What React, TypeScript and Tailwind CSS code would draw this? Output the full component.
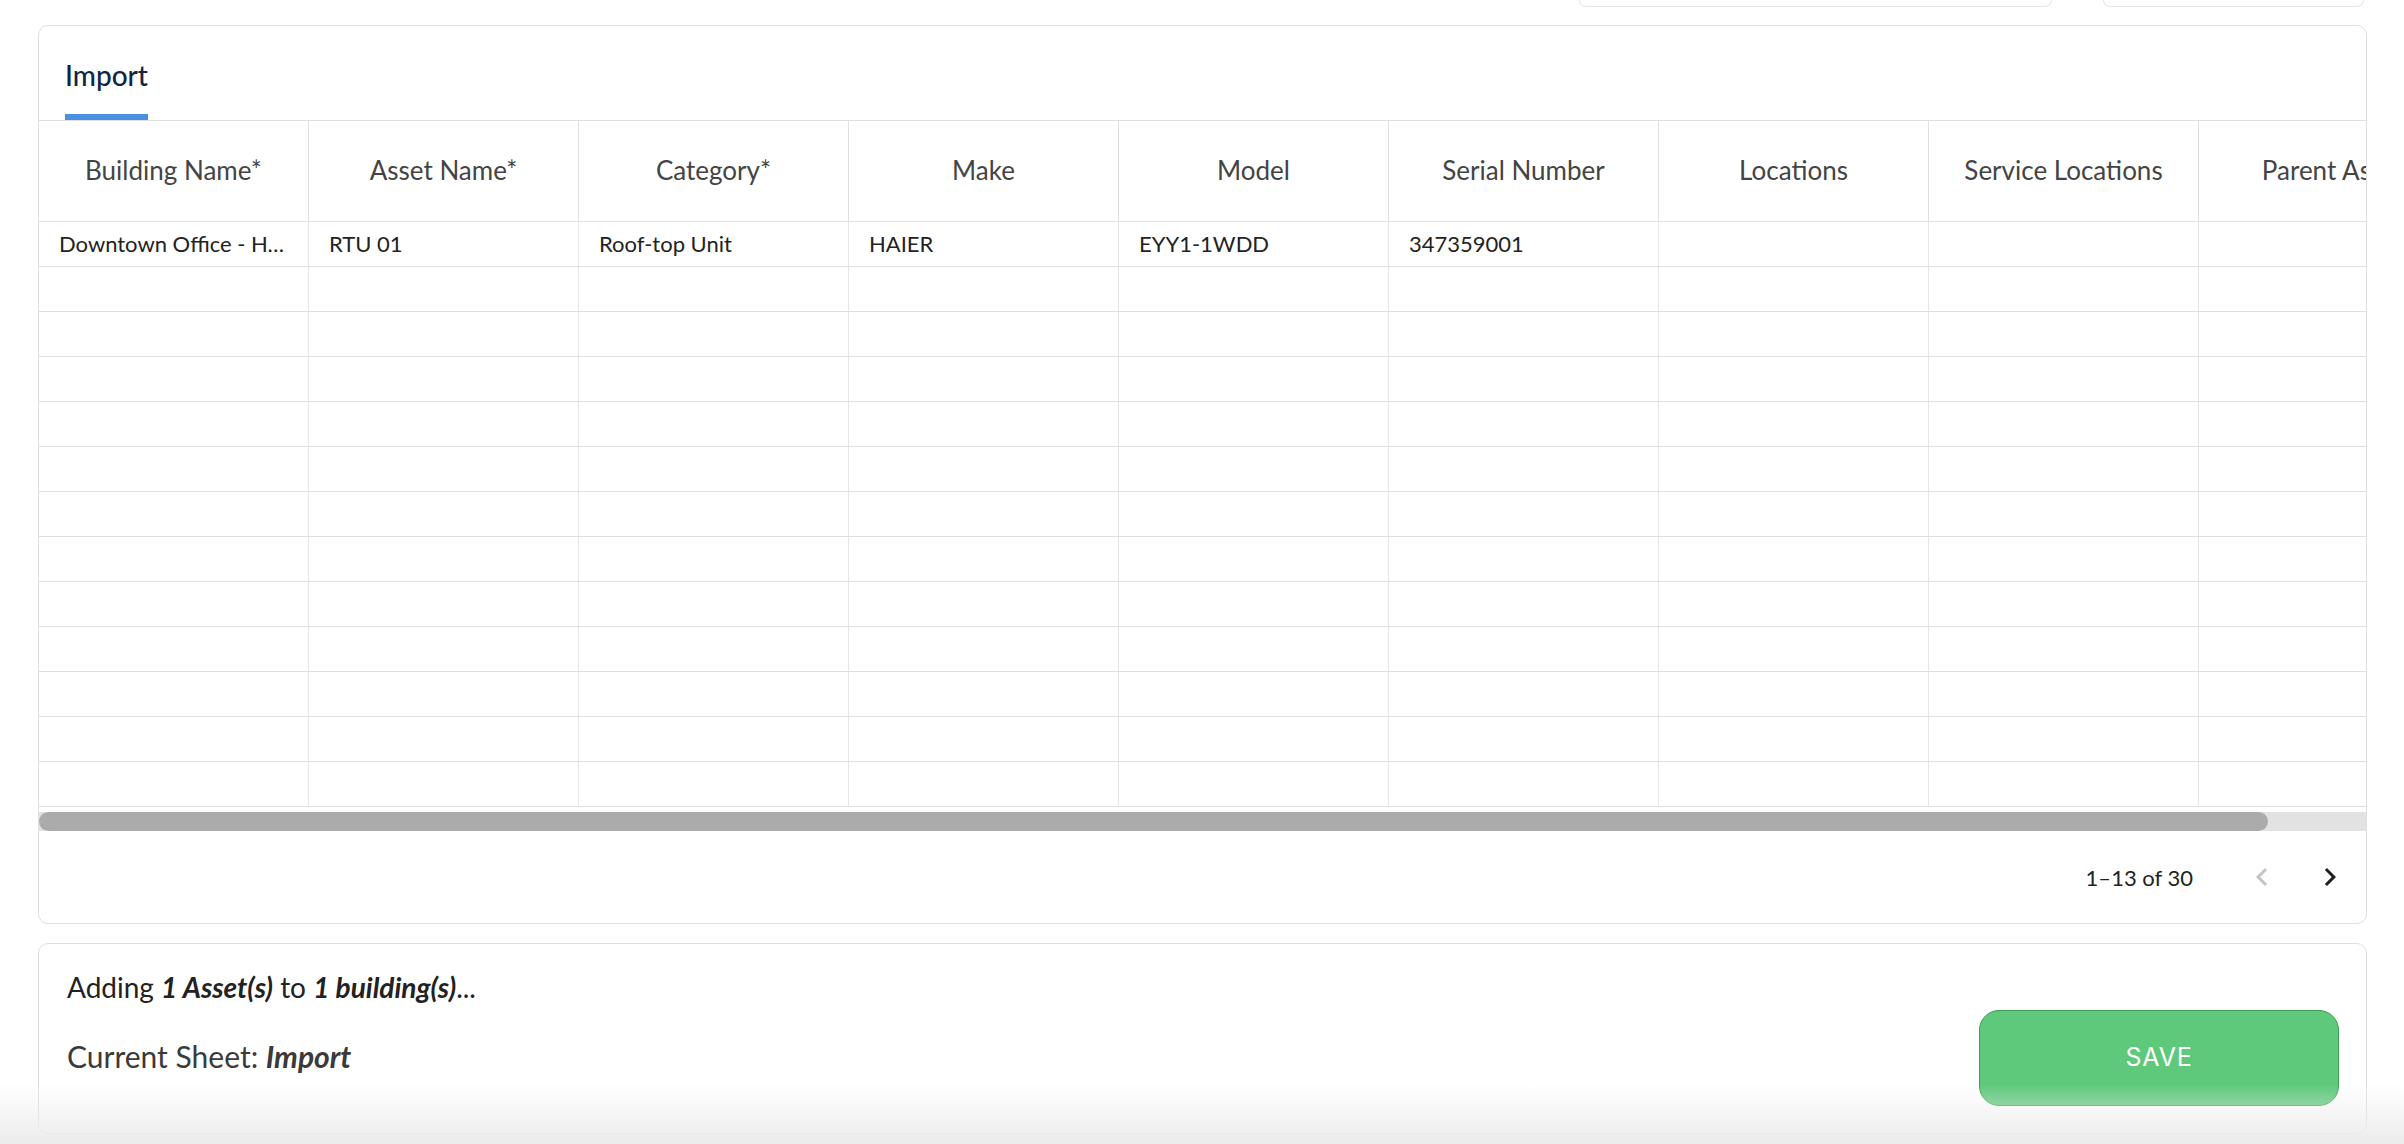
import { useState } from 'react';

const COLUMNS = [
  'Building Name*',
  'Asset Name*',
  'Category*',
  'Make',
  'Model',
  'Serial Number',
  'Locations',
  'Service Locations',
  'Parent Asset',
];

const FIRST_ROW = [
  'Downtown Office - Headquarters',
  'RTU 01',
  'Roof-top Unit',
  'HAIER',
  'EYY1-1WDD',
  '347359001',
  '',
  '',
  '',
];

const ROW_COUNT = 13;

const ChevronLeft = ({ className }: { className?: string }) => (
  <svg viewBox="0 0 24 24" className={className} fill="currentColor">
    <path d="M15.41 7.41 14 6l-6 6 6 6 1.41-1.41L10.83 12z" />
  </svg>
);

const ChevronRight = ({ className }: { className?: string }) => (
  <svg viewBox="0 0 24 24" className={className} fill="currentColor">
    <path d="M10 6 8.59 7.41 13.17 12l-4.58 4.59L10 18l6-6z" />
  </svg>
);

const ImportGrid = () => {
  const rows = Array.from({ length: ROW_COUNT }, (_, i) =>
    i === 0 ? FIRST_ROW : COLUMNS.map(() => ''),
  );

  return (
    <div className="overflow-hidden">
      <div className="w-[2430px]">
        {/* header */}
        <div className="flex h-[101px] border-b border-[#e0e0e0]">
          {COLUMNS.map((col) => (
            <div
              key={col}
              className="w-[270px] shrink-0 border-r border-[#e0e0e0] flex items-center justify-center pb-[2px] text-[26px] text-[#444444] whitespace-nowrap"
            >
              {col}
            </div>
          ))}
        </div>

        {/* rows */}
        {rows.map((row, r) => (
          <div key={r} className="flex h-[45px] border-b border-[#e0e0e0]">
            {row.map((cell, c) => (
              <div
                key={c}
                className="w-[270px] shrink-0 border-r border-[#e6e6e6] flex items-center pb-[2px] px-[20px] text-[22px] text-[#222222] min-w-0"
              >
                <span className="truncate">{cell}</span>
              </div>
            ))}
          </div>
        ))}
      </div>
    </div>
  );
};

export default function App() {
  const [page] = useState({ from: 1, to: 13, total: 30 });

  return (
    <div className="relative min-h-screen bg-white font-['Lato','Open_Sans',sans-serif]">
      <div className="pl-[38px] pr-[37px]">
        {/* bits of the toolbar above, scrolled mostly out of view */}
        <div className="flex justify-end gap-[51px] pr-[3px]">
          <div className="w-[473px] h-[7px] border border-t-0 border-[#e6e6e6] rounded-b-[12px]" />
          <div className="w-[261px] h-[7px] border border-t-0 border-[#e6e6e6] rounded-b-[12px]" />
        </div>

        {/* sheet card */}
        <div className="mt-[18px] border border-[#e0e0e0] rounded-[10px] overflow-hidden bg-white">
          <div className="flex items-end h-[95px] border-b border-[#e0e0e0] pl-[26px]">
            <div className="flex flex-col">
              <span className="text-[28px] leading-[34px] font-medium text-[#0f2541]">
                Import
              </span>
              <span className="mt-[22px] h-[6px] bg-[#4a90e2]" />
            </div>
          </div>

          <ImportGrid />

          {/* horizontal scrollbar */}
          <div className="mt-[5px] h-[19px] bg-[#e2e2e2]">
            <div className="h-full w-[2229px] rounded-full bg-[#ababab]" />
          </div>

          <div className="h-[92px] flex items-center justify-end pr-[18px] text-[#222222]">
            <span className="text-[22px]">
              {page.from}–{page.to} of {page.total}
            </span>
            <button className="ml-[51px] w-[36px] h-[36px] text-[#c4c4c4]">
              <ChevronLeft className="w-[36px] h-[36px]" />
            </button>
            <button className="ml-[32px] w-[36px] h-[36px] text-[#1f1f1f]">
              <ChevronRight className="w-[36px] h-[36px]" />
            </button>
          </div>
        </div>

        {/* summary card */}
        <div className="mt-[19px] h-[191px] border border-[#e0e0e0] rounded-[10px] bg-white flex justify-between">
          <div className="pt-[25px] pl-[28px]">
            <p className="text-[28px] leading-[36px] text-[#222222]">
              Adding <b className="italic font-bold">1 Asset(s)</b> to{' '}
              <b className="italic font-bold">1 building(s)</b>...
            </p>
            <p className="mt-[31px] text-[30px] leading-[40px] text-[#3a3a3a]">
              Current Sheet: <b className="italic font-bold">Import</b>
            </p>
          </div>
          <div className="self-end pb-[27px] pr-[27px]">
            <button className="w-[360px] h-[96px] rounded-[20px] bg-[#5ec97b] border border-[#3f9b53] text-white text-[25px] tracking-[0.03em] font-['Inter',sans-serif]">
              SAVE
            </button>
          </div>
        </div>
      </div>

      {/* fade at the bottom of the viewport */}
      <div className="pointer-events-none fixed inset-x-0 bottom-0 h-[60px] bg-linear-to-b from-transparent to-[#ececec]" />
    </div>
  );
}
